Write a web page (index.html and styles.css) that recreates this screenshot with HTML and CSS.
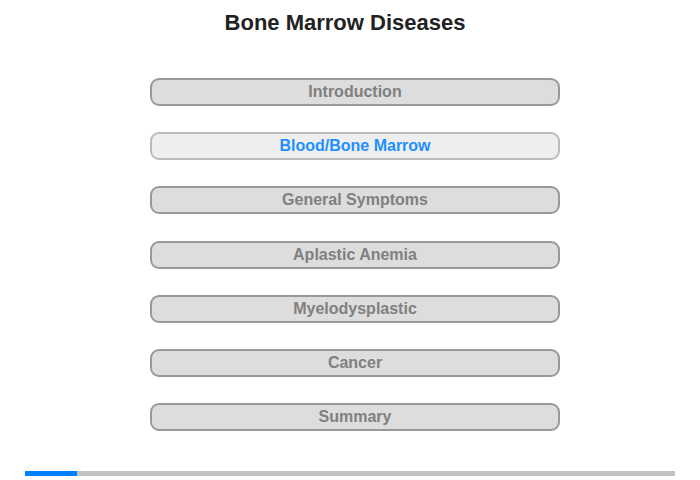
FILE: index.html
```html
<!DOCTYPE html>
<html>
<head>
<meta charset="utf-8">
<link rel="stylesheet" href="styles.css">
</head>
<body>
<div class="page">
  <h1 class="title">Bone Marrow Diseases</h1>
  <nav class="menu">
    <div class="item">Introduction</div>
    <div class="item active">Blood/Bone Marrow</div>
    <div class="item">General Symptoms</div>
    <div class="item">Aplastic Anemia</div>
    <div class="item">Myelodysplastic</div>
    <div class="item">Cancer</div>
    <div class="item">Summary</div>
  </nav>
  <div class="progress"><div class="progress-fill" style="width:52px"></div></div>
</div>
</body>
</html>
```
FILE: styles.css
```css
html, body {
  margin: 0;
  padding: 0;
  background: #ffffff;
}
.page {
  width: 700px;
  height: 480px;
  position: relative;
  font-family: "Liberation Sans", Arial, sans-serif;
  display: flex;
  flex-direction: column;
  align-items: center;
}
.title {
  margin: 10px 10px 0 0;
  font-size: 22px;
  line-height: 25px;
  font-weight: bold;
  color: #222222;
  text-align: center;
}
.menu {
  margin: 43px 0 0 10px;
  display: flex;
  flex-direction: column;
  gap: 26.2px;
}
.item {
  box-sizing: border-box;
  width: 410px;
  height: 28px;
  border: 2px solid #999999;
  border-radius: 9px;
  background: #dddddd;
  color: #808080;
  font-weight: bold;
  font-size: 16px;
  line-height: 24px;
  text-align: center;
}
.item.active {
  background: #eeeeee;
  border-color: #bbbbbb;
  color: #1e90ff;
}
.progress {
  position: absolute;
  left: 25px;
  top: 471px;
  width: 650px;
  height: 5px;
  background: #c2c2c2;
}
.progress-fill {
  height: 100%;
  background: #0080ff;
}
```
